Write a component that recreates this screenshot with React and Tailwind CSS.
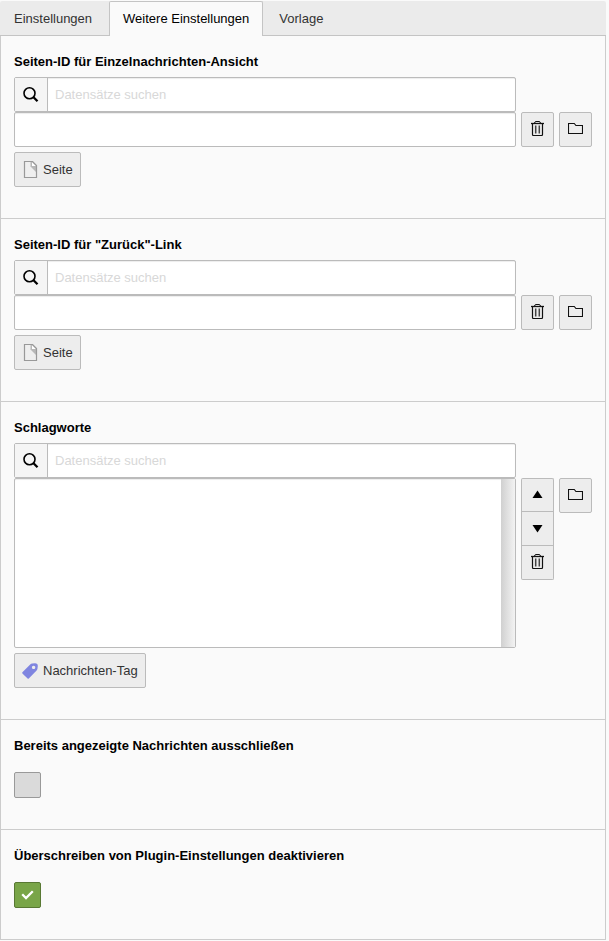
import React from 'react';

const buttonLook =
  'flex items-center justify-center border border-[#bbbbbb] bg-[#ededed] text-[#333333]';

function SearchIcon() {
  return (
    <svg width="16" height="15" viewBox="0 0 16 15" fill="none" stroke="#000" aria-hidden="true">
      <circle cx="6.5" cy="6.3" r="5.5" strokeWidth="1.6" />
      <path d="M10.5 10.2l4 4" strokeWidth="2.3" />
    </svg>
  );
}

function TrashIcon() {
  return (
    <svg width="15" height="15" viewBox="0 0 15 15" fill="none" stroke="#111" aria-hidden="true">
      <path d="M1 2.5h13" strokeWidth="1.3" />
      <path d="M4.5 2.5q0-2 1.5-2h3q1.5 0 1.5 2" />
      <path d="M2.5 3v10.5q0 1 1 1h8q1 0 1-1V3" strokeWidth="1.2" />
      <path d="M5.7 4.5v8M9.3 4.5v8" stroke="#444" strokeWidth="1.5" />
    </svg>
  );
}

function FolderIcon() {
  return (
    <svg width="15" height="15" viewBox="0 0 15 15" fill="none" stroke="#111" strokeWidth="1.1" aria-hidden="true">
      <path d="M.5 12.5v-10h5.8l1.6 2h6.6v8z" />
    </svg>
  );
}

function UpIcon() {
  return (
    <svg width="15" height="14" viewBox="0 0 15 14" fill="#000" aria-hidden="true">
      <path d="M2.5 11h10L7.5 3.5z" />
    </svg>
  );
}

function DownIcon() {
  return (
    <svg width="15" height="15" viewBox="0 0 15 15" fill="#000" aria-hidden="true">
      <path d="M2.5 5h10l-5 7.5z" />
    </svg>
  );
}

function PageIcon() {
  return (
    <svg width="16" height="17" viewBox="0 0 16 17" aria-hidden="true">
      <path d="M2.5 .5h8l4 4v12h-12z" fill="#efefef" />
      <path d="M8.5 .5v5l6 6v-7l-4-4z" fill="#b8b8b8" />
      <path d="M10 1v4h4z" fill="#fff" />
      <path d="M2.5 .5h8l4 4v12h-12z" fill="none" stroke="#999" strokeWidth="1.2" />
    </svg>
  );
}

function TagIcon() {
  return (
    <svg width="16" height="16" viewBox="0 0 16 16" aria-hidden="true">
      <path
        fillRule="evenodd"
        fill="#7f85e0"
        d="M0.4 9.2L8.2 1.4Q9 .6 10.2.5L13 .3Q15.9.3 15.8 3L15.5 5.6Q15.4 6.8 14.6 7.6L6.8 15.6Q6.2 16 5.6 15.5L.4 10.4Q0 9.8 .4 9.2zM11.6 2.7a1.7 1.7 0 1 0 .01 0z"
      />
    </svg>
  );
}

function Section({ children }) {
  return (
    <section className="border-b border-[#cccccc] pt-4 pr-[13px] pb-[31px] pl-[13px]">
      {children}
    </section>
  );
}

function RecordField({ id, label, tall, type, icon }) {
  return (
    <Section>
      <label htmlFor={id} className="mb-[5px] block leading-5 font-bold text-black">
        {label}
      </label>
      <div className="grid grid-cols-[minmax(0,1fr)_33px_33px] items-start gap-x-[5px]">
        <div className="flex h-[35px] rounded-[2px] border border-[#bbbbbb] bg-white">
          <span className="flex w-[33px] items-center justify-center border-r border-[#bbbbbb] bg-[#f5f5f5]">
            <SearchIcon />
          </span>
          <input
            id={id}
            type="search"
            placeholder="Datensätze suchen"
            className="min-w-0 flex-1 bg-transparent px-[7px] shadow-[inset_0_1px_1px_rgba(0,0,0,0.075)] outline-none placeholder:text-[#d8d8d8]"
          />
        </div>
        <div
          className={`col-start-1 flex rounded-[2px] border border-[#bbbbbb] bg-white shadow-[inset_0_1px_1px_rgba(0,0,0,0.075)] ${
            tall ? 'h-[170px]' : 'h-[35px]'
          }`}
        >
          <select
            multiple
            aria-label={`${label}: Auswahl`}
            className="h-full min-w-0 flex-1 appearance-none overflow-hidden bg-transparent outline-none"
          />
          {tall && <div className="w-3.5 bg-linear-to-r from-[#d0d0d0] to-[#f3f3f3]" />}
        </div>
        {tall ? (
          <div className="flex flex-col">
            <button type="button" aria-label="Nach oben" className={`h-[33px] rounded-t-[2px] border-b-0 pb-0.5 ${buttonLook}`}>
              <UpIcon />
            </button>
            <button type="button" aria-label="Nach unten" className={`h-[35px] pb-0.5 ${buttonLook}`}>
              <DownIcon />
            </button>
            <button type="button" aria-label="Entfernen" className={`h-[34px] rounded-b-[2px] border-t-0 pb-0.5 ${buttonLook}`}>
              <TrashIcon />
            </button>
          </div>
        ) : (
          <button type="button" aria-label="Entfernen" className={`h-[35px] rounded-[2px] pb-0.5 ${buttonLook}`}>
            <TrashIcon />
          </button>
        )}
        <button type="button" aria-label="Durchsuchen" className={`h-[35px] rounded-[2px] pb-0.5 ${buttonLook}`}>
          <FolderIcon />
        </button>
      </div>
      <button type="button" className={`mt-[5px] h-[35px] gap-[5px] rounded-[2px] px-[7px] ${buttonLook}`}>
        {icon}
        {type}
      </button>
    </Section>
  );
}

function CheckField({ id, label, checked }) {
  return (
    <Section>
      <label htmlFor={id} className="mb-4 block leading-5 font-bold text-black">
        {label}
      </label>
      <div className="grid h-[26px] w-[27px]">
        <input
          id={id}
          type="checkbox"
          defaultChecked={checked}
          className="peer col-start-1 row-start-1 h-full w-full appearance-none rounded-[2px] border border-[#999999] bg-[#dadada] checked:border-[#587833] checked:bg-[#79a548]"
        />
        <svg
          className="pointer-events-none invisible col-start-1 row-start-1 place-self-center peer-checked:visible"
          width="13"
          height="12"
          viewBox="0 0 13 12"
          fill="none"
          stroke="#fff"
          strokeWidth="2.3"
          aria-hidden="true"
        >
          <path d="M1.2 5.2l3.8 3.8 6.8-6.8" />
        </svg>
      </div>
    </Section>
  );
}

export default function App() {
  return (
    <div className="min-h-screen bg-[#fafafa] pt-px pr-[3px] font-['Liberation_Sans',Arial,sans-serif] text-[13px] leading-[18px] text-[#333333]">
      <div role="tablist" className="flex h-[35px] rounded-t-[2px] bg-[#ebebeb]">
        <button type="button" role="tab" aria-selected="false" className="border-b border-[#c4c4c4] pt-px pr-[17px] pl-3.5">
          Einstellungen
        </button>
        <button
          type="button"
          role="tab"
          aria-selected="true"
          className="rounded-t-[2px] border border-b-0 border-[#c4c4c4] bg-[#fafafa] px-[13px] text-black"
        >
          Weitere Einstellungen
        </button>
        <div className="flex flex-1 border-b border-[#c4c4c4]">
          <button type="button" role="tab" aria-selected="false" className="px-4 pt-px">
            Vorlage
          </button>
        </div>
      </div>
      <main className="border-x border-[#cccccc]">
        <RecordField id="single" label="Seiten-ID für Einzelnachrichten-Ansicht" type="Seite" icon={<PageIcon />} />
        <RecordField id="back" label={'Seiten-ID für "Zurück"-Link'} type="Seite" icon={<PageIcon />} />
        <RecordField id="tags" label="Schlagworte" type="Nachrichten-Tag" icon={<TagIcon />} tall />
        <CheckField id="exclude" label="Bereits angezeigte Nachrichten ausschließen" />
        <CheckField id="override" label="Überschreiben von Plugin-Einstellungen deaktivieren" checked />
      </main>
    </div>
  );
}
